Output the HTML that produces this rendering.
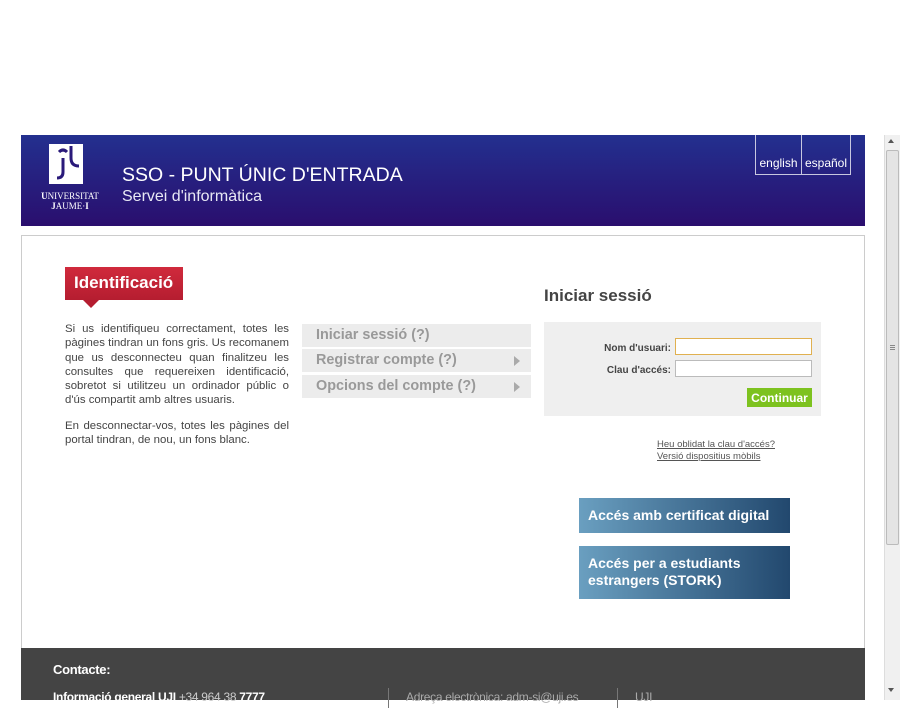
<!DOCTYPE html>
<html><head><meta charset="utf-8"><style>
*{margin:0;padding:0;box-sizing:border-box}
body{width:900px;height:700px;overflow:hidden;background:#fff;font-family:"Liberation Sans",Arial,sans-serif;position:relative}
.hdr{position:absolute;left:21px;top:135px;width:844px;height:91px;background:linear-gradient(#23308f,#2a0e6e)}
.t1{position:absolute;left:101px;top:29px;color:#fff;font-size:19.5px}
.t2{position:absolute;left:101px;top:53px;color:#e8e8f4;font-size:16px}
.lang{position:absolute;top:0;height:40px;border:1px solid #c8c8e0;border-top:none;color:#fff;font-size:12px;padding-top:21px;text-align:center}
.logo{position:absolute;left:20px;top:9px}
.box{position:absolute;left:21px;top:235px;width:844px;height:420px;border:1px solid #ccc;border-bottom:none}
.tag{position:absolute;left:65px;top:267px;width:118px;height:33px;background:linear-gradient(#d02a3c,#b51d30);color:#fff;font-weight:bold;font-size:17px;padding:6px 0 0 9px}
.tag:after{content:"";position:absolute;left:18px;top:33px;border:8px solid transparent;border-top:8px solid #b51d30;border-bottom:none}
.desc{position:absolute;left:65px;top:322px;width:224px;font-size:11.4px;line-height:14.3px;color:#444;text-align:justify}
.menu{position:absolute;left:302px;width:229px;height:23px;background:#ececec;color:#999;font-weight:bold;font-size:14.4px;padding:3px 0 0 14px}
.menu i{position:absolute;right:11px;top:7px;border:5px solid transparent;border-left:6px solid #aaa;border-right:none}
.is{position:absolute;left:544px;top:286px;font-size:17px;font-weight:bold;color:#444}
.form{position:absolute;left:544px;top:322px;width:277px;height:94px;background:#efefef}
.lbl{position:absolute;right:150px;font-size:10px;font-weight:bold;color:#444}
.inp{position:absolute;left:131px;width:137px;height:17px;background:#fff;border:1px solid #bbb}
.btn{position:absolute;left:203px;top:66px;width:65px;height:19px;background:#7dc21f;color:#fff;font-weight:bold;font-size:12px;text-align:center;padding-top:3px}
.lk{position:absolute;left:657px;font-size:9.5px;color:#555;text-decoration:underline}
.bb{position:absolute;left:579px;width:211px;background:linear-gradient(90deg,#6a9fc0,#22486e);color:#fff;font-weight:bold;font-size:14px;padding:9px 9px;line-height:17px}
.ftr{position:absolute;left:21px;top:648px;width:844px;height:52px;background:#444;color:#fff;font-size:12px;letter-spacing:-0.3px}
.sb{position:absolute;left:884px;top:135px;width:16px;height:565px;background:#f0f0f0;border-left:1px solid #ddd}
</style></head><body>
<div class="hdr">
 <div class="logo">
  <svg width="46" height="40" viewBox="0 0 46 40"><rect x="8" y="0" width="34" height="40" fill="#fff"/><path d="M18 8 q4-4 8 0 M22 14 v14 q0 6-6 6 M30 2 v12 q0 8 8 8" stroke="#2a1a7a" stroke-width="3" fill="none"/></svg>
  <div style="color:#fff;font-family:'Liberation Serif',serif;font-size:9px;line-height:10px;margin-top:2px;text-align:center;width:64px;margin-left:-3px"><b>U</b>NIVERSITAT<br><b>J</b>AUME·<b>I</b></div>
 </div>
 <div class="t1">SSO - PUNT ÚNIC D'ENTRADA</div>
 <div class="t2">Servei d'informàtica</div>
 <div class="lang" style="left:734px;width:47px">english</div>
 <div class="lang" style="left:780px;width:50px">español</div>
</div>
<div class="box"></div>
<div class="tag">Identificació</div>
<div class="desc">Si us identifiqueu correctament, totes les pàgines tindran un fons gris. Us recomanem que us desconnecteu quan finalitzeu les consultes que requereixen identificació, sobretot si utilitzeu un ordinador públic o d'ús compartit amb altres usuaris.<br><span style="display:block;height:11px"></span>En desconnectar-vos, totes les pàgines del portal tindran, de nou, un fons blanc.</div>
<div class="menu" style="top:324px">Iniciar sessió (?)</div>
<div class="menu" style="top:349px">Registrar compte (?)<i></i></div>
<div class="menu" style="top:375px">Opcions del compte (?)<i></i></div>
<div class="is">Iniciar sessió</div>
<div class="form">
 <div class="lbl" style="top:21px">Nom d'usuari:</div>
 <div class="inp" style="top:16px;border:1px solid #e0b050"></div>
 <div class="lbl" style="top:43px">Clau d'accés:</div>
 <div class="inp" style="top:38px"></div>
 <div class="btn">Continuar</div>
</div>
<div class="lk" style="top:439px">Heu oblidat la clau d'accés?</div>
<div class="lk" style="top:451px">Versió dispositius mòbils</div>
<div class="bb" style="top:498px;height:35px">Accés amb certificat digital</div>
<div class="bb" style="top:546px;height:53px">Accés per a estudiants estrangers (STORK)</div>
<div class="ftr">
 <div style="position:absolute;left:32px;top:14px;font-weight:bold;font-size:13px">Contacte:</div>
 <div style="position:absolute;left:32px;top:42px;font-weight:bold">Informació general UJI <span style="font-weight:normal;color:#ccc">+34 964 38</span> 7777</div>
 <div style="position:absolute;left:367px;top:40px;height:20px;border-left:1px solid #777"></div>
 <div style="position:absolute;left:385px;top:42px;color:#aaa">Adreça electrònica: adm-si@uji.es</div>
 <div style="position:absolute;left:596px;top:40px;height:20px;border-left:1px solid #777"></div>
 <div style="position:absolute;left:614px;top:42px;color:#aaa">UJI</div>
</div>
<div class="sb">
 <div style="position:absolute;left:3px;top:4px;border:3px solid transparent;border-bottom:4px solid #555;border-top:none"></div>
 <div style="position:absolute;left:1px;top:15px;width:13px;height:395px;background:#e4e4e4;border:1px solid #bbb;border-radius:2px"></div>
 <div style="position:absolute;left:5px;top:210px;width:5px;height:1px;background:#888;box-shadow:0 2px #888,0 4px #888"></div>
 <div style="position:absolute;left:3px;top:553px;border:3px solid transparent;border-top:4px solid #555;border-bottom:none"></div>
</div>
</body></html>
